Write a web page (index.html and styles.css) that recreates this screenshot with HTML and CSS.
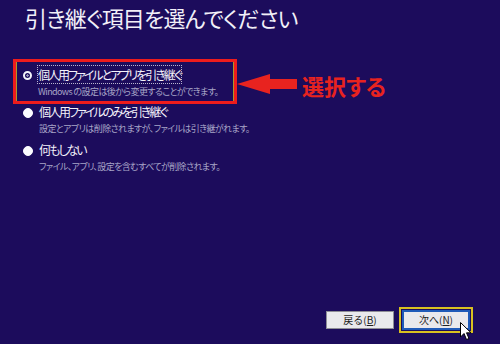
FILE: index.html
```html
<!DOCTYPE html>
<html lang="ja">
<head>
  <meta charset="UTF-8" />
  <title>引き継ぐ項目を選んでください</title>
  <link rel="stylesheet" href="styles.css">
</head>
<body>
  <div class="page">
    <h1 class="title">引き継ぐ項目を選んでください</h1>

    <div class="options">
      <div class="option selected">
        <span class="radio"></span>
        <div class="option-body">
          <div class="option-label"><span class="focus">個人用ファイルとアプリを引き継ぐ</span></div>
          <div class="option-desc">Windows の設定は後から変更することができます。</div>
        </div>
      </div>
      <div class="option">
        <span class="radio"></span>
        <div class="option-body">
          <div class="option-label">個人用ファイルのみを引き継ぐ</div>
          <div class="option-desc">設定とアプリは削除されますが、ファイルは引き継がれます。</div>
        </div>
      </div>
      <div class="option">
        <span class="radio"></span>
        <div class="option-body">
          <div class="option-label">何もしない</div>
          <div class="option-desc">ファイル、アプリ、設定を含むすべてが削除されます。</div>
        </div>
      </div>
    </div>

    <!-- annotation -->
    <div class="note">
      <svg class="note-arrow" width="62" height="22" viewBox="0 0 62 22">
        <polygon points="0,10 33,0 33,5 60,5 60,15 33,15 33,20" fill="#e8231f"/>
      </svg>
      <span class="note-text">選択する</span>
    </div>

    <div class="footer">
      <button class="btn">戻る(<u>B</u>)</button>
      <span class="btn-ring"><button class="btn btn-default">次へ(<u>N</u>)</button></span>
    </div>

    <svg class="cursor" width="12" height="19" viewBox="0 0 12 19">
      <polygon points="0.5,0.5 0.5,15 4,11.5 6.5,17.5 9,16.5 6.5,10.8 11,10.8" fill="#fff" stroke="#000" stroke-width="1"/>
    </svg>
  </div>
</body>
</html>
```

FILE: styles.css
```css
body {
  margin: 0;
  background-color: #1c0c5c;
  font-family: "Noto Sans CJK JP", "Noto Sans", sans-serif;
  font-feature-settings: "palt";
}
.page {
  position: relative;
  width: 500px;
  height: 344px;
  display: flex;
  flex-direction: column;
  overflow: hidden;
}
.title {
  margin: 0;
  padding: 0 0 0 25px;
  font-size: 22px;
  font-weight: normal;
  line-height: 34px;
  letter-spacing: -0.8px;
  color: #f2f0f8;
}
.options {
  margin-top: 25px;
  display: flex;
  flex-direction: column;
}
.option {
  display: flex;
  align-items: flex-start;
  gap: 6px;
  margin: 0 0 6px 16px;
  padding-left: 7px;
  width: 211px;
  white-space: nowrap;
}
.option.selected {
  margin: 0 0 0 13px;
  padding: 5px 0 2px 7px;
  border: 3px solid #ee1c1c;
  box-shadow: inset 1px 0 #a89a2c, inset -1px 0 #a89a2c;
}
.radio {
  flex: none;
  width: 8px;
  height: 8px;
  margin-top: 4px;
  border-radius: 50%;
  background-color: #fbfbff;
  border: 1px solid #fbfbff;
}
.selected .radio {
  background-color: #1c0c5c;
  border: 2px solid #f4f4fa;
  width: 5px;
  height: 5px;
  box-shadow: inset 0 0 0 1px #1c0c5c;
  background-image: radial-gradient(circle, #9a98b8 0 1px, transparent 1.5px);
}
.option-label {
  font-size: 12px;
  line-height: 16px;
  letter-spacing: -2px;
  color: #f4f2fa;
}
.focus {
  outline: 1px dotted #b8b6d0;
  outline-offset: 0;
}
.option-desc {
  margin-top: 2px;
  font-size: 9px;
  line-height: 14px;
  letter-spacing: -0.6px;
  color: #a9a6c8;
}
.note {
  position: absolute;
  left: 237px;
  top: 73px;
  display: flex;
  align-items: center;
  gap: 3px;
}
.note-arrow {
  display: block;
}
.note-text {
  font-size: 22px;
  font-weight: bold;
  line-height: 24px;
  color: #e8231f;
}
.footer {
  margin-top: auto;
  display: flex;
  align-items: center;
  justify-content: flex-end;
  gap: 5px;
  padding: 0 27px 11px 0;
}
.btn {
  width: 68px;
  height: 18px;
  padding: 0;
  font-family: inherit;
  font-size: 10px;
  line-height: 14px;
  color: #222;
  background-color: #e9e9ec;
  border: 1px solid #8e8e96;
}
.btn-ring {
  display: block;
  padding: 1px;
  border: 2px solid #d8c020;
}
.btn-default {
  display: block;
  width: 68px;
  height: 20px;
  border: 2px solid #1f5bb8;
}
.cursor {
  position: absolute;
  left: 460px;
  top: 322px;
}
```
